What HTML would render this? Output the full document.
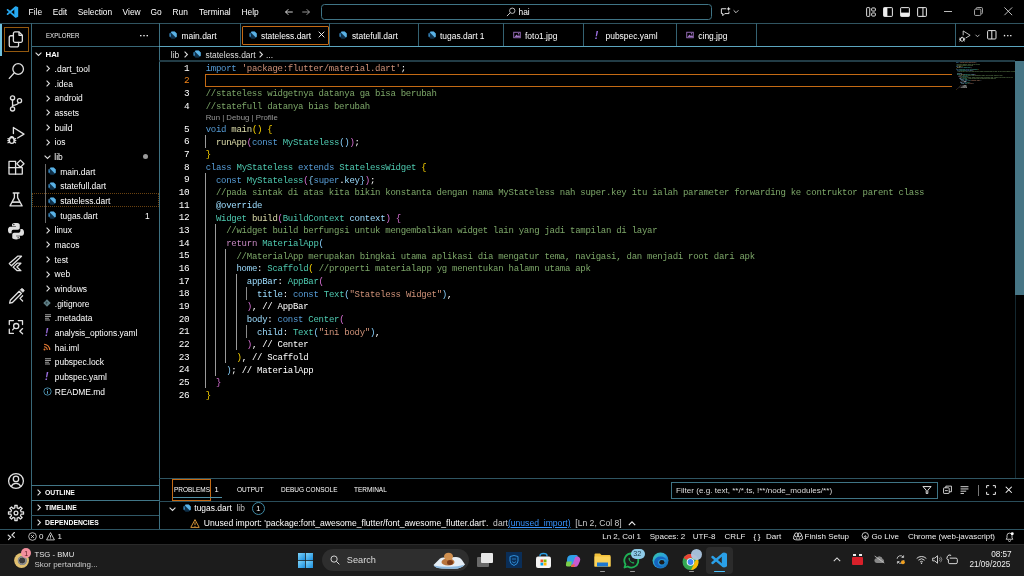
<!DOCTYPE html><html><head><meta charset="utf-8"><style>
*{margin:0;padding:0;box-sizing:border-box}
html,body{width:1024px;height:576px;overflow:hidden;background:#000}
body{position:relative;font-family:"Liberation Sans",sans-serif;color:#fff}
.a{position:absolute}
.t{position:absolute;white-space:pre;line-height:1}
.ui{font-size:8.4px}
.hl{position:absolute;height:1px;background:#3f7485}
.vl{position:absolute;width:1px;background:#3f7485}
.code{position:absolute;left:205.7px;font-family:"Liberation Mono",monospace;font-size:9px;letter-spacing:-0.269px;padding-top:1.7px;white-space:pre;height:12.667px;line-height:12.667px;color:#fff}
.ln{position:absolute;left:160px;width:29.2px;text-align:right;font-family:"Liberation Mono",monospace;font-size:9.4px;letter-spacing:-0.45px;padding-top:1.3px;height:12.667px;line-height:12.667px;color:#fff}
.k{color:#569cd6} .s{color:#ce9178} .c{color:#7ca668} .f{color:#dcdcaa} .ty{color:#4ec9b0} .v{color:#9cdcfe} .r{color:#c586c0}
.b1{color:#ffd700} .b2{color:#da70d6} .b3{color:#87cefa} .p{color:#fff}
.g{position:absolute;width:1px;background:#959595}
svg{position:absolute;overflow:visible}
</style></head><body><div id="root" style="position:absolute;left:0;top:0;width:1024px;height:576px;will-change:transform">
<svg class="a" style="left:0.6px;top:0.7px" width="20" height="20" viewBox="0 0 20 20"><path d="M13.3 6.3L15.6 5.4L17.2 6.2V15.8L15.6 16.6L13.3 15.7Z" fill="#26a8f0"/><path d="M14.6 6.2L6.6 13.1M6.6 8.9L14.6 15.8" stroke="#26a8f0" stroke-width="1.8" stroke-linecap="round"/></svg>
<div class="t ui" style="left:28.6px;top:7.5px;color:#fff">File</div>
<div class="t ui" style="left:52.7px;top:7.5px;color:#fff">Edit</div>
<div class="t ui" style="left:77.7px;top:7.5px;color:#fff">Selection</div>
<div class="t ui" style="left:122.6px;top:7.5px;color:#fff">View</div>
<div class="t ui" style="left:150.5px;top:7.5px;color:#fff">Go</div>
<div class="t ui" style="left:172.5px;top:7.5px;color:#fff">Run</div>
<div class="t ui" style="left:199px;top:7.5px;color:#fff">Terminal</div>
<div class="t ui" style="left:241.5px;top:7.5px;color:#fff">Help</div>
<svg style="left:284px;top:7px" width="10" height="10" viewBox="0 0 16 16"><path d="M14 8H2.5M7 3.5L2.5 8 7 12.5" stroke="#f0f0f0" stroke-width="1.4" fill="none"/></svg>
<svg style="left:301px;top:7px" width="10" height="10" viewBox="0 0 16 16"><path d="M2 8h11.5M9 3.5L13.5 8 9 12.5" stroke="#a8a8a8" stroke-width="1.4" fill="none"/></svg>
<div class="a" style="left:321px;top:4px;width:390.5px;height:15.5px;border:1px solid #3f7485;border-radius:3.5px"></div>
<svg style="left:506px;top:6.5px" width="10" height="10" viewBox="0 0 16 16"><circle cx="10" cy="6" r="4.3" stroke="#d0d0d0" stroke-width="1.4" fill="none"/><path d="M7 9L1.5 14.5" stroke="#d0d0d0" stroke-width="1.5"/></svg>
<div class="t ui" style="left:518.5px;top:7.5px">hai</div>
<svg style="left:720px;top:6px" width="11" height="11" viewBox="0 0 16 16"><path d="M2 4h7M2 4v7h2v3l3-3h6V8" stroke="#e8e8e8" stroke-width="1.4" fill="none"/><path d="M12.5 1l1 2.2 2.2 1-2.2 1-1 2.2-1-2.2-2.2-1 2.2-1z" fill="#e8e8e8"/></svg>
<svg style="left:732.5px;top:9px" width="6" height="5" viewBox="0 0 10 8"><path d="M1 2l4 4 4-4" stroke="#ddd" stroke-width="1.5" fill="none"/></svg>
<svg style="left:866px;top:7px" width="10" height="10" viewBox="0 0 16 16"><rect x="1" y="1" width="5" height="14" rx="1" stroke="#eee" stroke-width="1.5" fill="none"/><rect x="9" y="1.5" width="6" height="5" rx="1.5" stroke="#eee" stroke-width="1.5" fill="none"/><rect x="9" y="9.5" width="6" height="5" rx="1.5" stroke="#eee" stroke-width="1.5" fill="none"/></svg>
<svg style="left:882.5px;top:7px" width="10" height="10" viewBox="0 0 16 16"><rect x="1" y="1" width="14" height="14" rx="1" stroke="#eee" stroke-width="1.6" fill="none"/><rect x="1" y="1" width="6" height="14" fill="#eee"/></svg>
<svg style="left:899.5px;top:7px" width="10" height="10" viewBox="0 0 16 16"><rect x="1" y="1" width="14" height="14" rx="1" stroke="#eee" stroke-width="1.6" fill="none"/><rect x="1" y="9" width="14" height="6" fill="#eee"/></svg>
<svg style="left:917px;top:7px" width="10" height="10" viewBox="0 0 16 16"><rect x="1" y="1" width="14" height="14" rx="1" stroke="#eee" stroke-width="1.6" fill="none"/><path d="M9.5 1v14" stroke="#eee" stroke-width="1.6"/></svg>
<div class="a" style="left:944px;top:11px;width:8px;height:1px;background:#bbb"></div>
<svg style="left:974px;top:7px" width="9" height="9" viewBox="0 0 10 10"><rect x="0.6" y="2.4" width="7" height="7" rx="1.2" stroke="#ccc" stroke-width="0.9" fill="none"/><path d="M2.4 2.2V1.8A1.2 1.2 0 0 1 3.6 0.6H8.2A1.2 1.2 0 0 1 9.4 1.8V6.4A1.2 1.2 0 0 1 8.2 7.6" stroke="#ccc" stroke-width="0.9" fill="none"/></svg>
<svg style="left:1004.2px;top:7.2px" width="8.6" height="8.6" viewBox="0 0 10 10"><path d="M0.5 0.5L9.5 9.5M9.5 0.5L0.5 9.5" stroke="#e8e8e8" stroke-width="0.95"/></svg>
<div class="hl" style="left:0;top:23px;width:1024px;background:rgb(48,84,97)"></div>
<div class="a" style="left:0;top:23.5px;width:1.5px;height:32px;background:#6fc3df"></div>
<div class="a" style="left:3.5px;top:26.5px;width:25.5px;height:25px;border:1px solid #94590f"></div>
<svg style="left:4px;top:28px" width="24" height="24" viewBox="0 0 24 24"><path d="M9.4 7.75H6.75A1.5 1.5 0 0 0 5.25 9.25V17.45A1.5 1.5 0 0 0 6.75 18.95H13.05A1.5 1.5 0 0 0 14.55 17.45V14.35" stroke="#e0e0e0" stroke-width="1.3" fill="none" stroke-linejoin="round" stroke-linecap="round"/><path d="M10.9 3.95H15L18.35 7.3V12.85A1.5 1.5 0 0 1 16.85 14.35H10.9A1.5 1.5 0 0 1 9.4 12.85V5.45A1.5 1.5 0 0 1 10.9 3.95Z" stroke="#e0e0e0" stroke-width="1.3" fill="none" stroke-linejoin="round" stroke-linecap="round"/><path d="M15 4.2V7.3H18.1" stroke="#e0e0e0" stroke-width="1.3" fill="none" stroke-linejoin="round" stroke-linecap="round"/></svg>
<svg style="left:4px;top:59px" width="24" height="24" viewBox="0 0 24 24"><circle cx="14.15" cy="10" r="5.3" stroke="#e0e0e0" stroke-width="1.3" fill="none" stroke-linejoin="round" stroke-linecap="round"/><path d="M5.3 19.4L9.9 14.3" stroke="#e0e0e0" stroke-width="1.3" fill="none" stroke-linejoin="round" stroke-linecap="round"/></svg>
<svg style="left:4px;top:91px" width="24" height="24" viewBox="0 0 24 24"><circle cx="8.54" cy="6.9" r="2.1" stroke="#e0e0e0" stroke-width="1.3" fill="none" stroke-linejoin="round" stroke-linecap="round"/><circle cx="15.5" cy="9.8" r="2.1" stroke="#e0e0e0" stroke-width="1.3" fill="none" stroke-linejoin="round" stroke-linecap="round"/><circle cx="8.54" cy="17.9" r="2.1" stroke="#e0e0e0" stroke-width="1.3" fill="none" stroke-linejoin="round" stroke-linecap="round"/><path d="M8.54 9V15.8M14.5 11.7Q13.3 14 8.7 14.4" stroke="#e0e0e0" stroke-width="1.3" fill="none" stroke-linejoin="round" stroke-linecap="round"/></svg>
<svg style="left:4px;top:123.33000000000001px" width="24" height="24" viewBox="0 0 24 24"><path d="M9.4 10.5V4.5L20 11.1L13.6 15" stroke="#e0e0e0" stroke-width="1.3" fill="none" stroke-linejoin="round" stroke-linecap="round"/><ellipse cx="7.8" cy="17.4" rx="2.4" ry="2.9" stroke="#e0e0e0" stroke-width="1.3" fill="none" stroke-linejoin="round" stroke-linecap="round"/><path d="M6 14.6Q7.8 12.6 9.6 14.6M4 15.6L5.5 16.3M11.6 15.6L10.1 16.3M3.8 17.6H5.4M11.8 17.6H10.2M4 19.8L5.5 19M11.6 19.8L10.1 19" stroke="#e0e0e0" stroke-width="1.3" fill="none" stroke-linejoin="round" stroke-linecap="round"/></svg>
<svg style="left:4px;top:155.33px" width="24" height="24" viewBox="0 0 24 24"><path d="M5 6.4H11.6V12.7H18.3V19.1H5Z" stroke="#e0e0e0" stroke-width="1.3" fill="none" stroke-linejoin="round" stroke-linecap="round"/><path d="M5 12.7H11.6V19.1" stroke="#e0e0e0" stroke-width="1.3" fill="none" stroke-linejoin="round" stroke-linecap="round"/><path d="M16.4 5.1L20 8.7L16.4 12.3L12.8 8.7Z" stroke="#e0e0e0" stroke-width="1.3" fill="none" stroke-linejoin="round" stroke-linecap="round"/></svg>
<svg style="left:4px;top:187.33px" width="24" height="24" viewBox="0 0 24 24"><path d="M9.2 6H15M10.4 6V10.6L6 18.9H18.1L13.6 10.6V6" stroke="#e0e0e0" stroke-width="1.3" fill="none" stroke-linejoin="round" stroke-linecap="round"/><path d="M8 15.1H16" stroke="#e0e0e0" stroke-width="1.6"/></svg>
<svg style="left:4px;top:219.33px" width="24" height="24" viewBox="0 0 24 24"><g transform="translate(2.4 3.8) scale(0.8 0.7)"><path d="M11.8 0.3c-5 0-4.7 2.2-4.7 2.2v2.3h4.8v.7H5.2S2 5.1 2 10.2s2.8 4.9 2.8 4.9h1.7v-2.4s-.1-2.8 2.8-2.8h4.7s2.7 0 2.7-2.6V3s.4-2.7-4.9-2.7z" fill="#e0e0e0"/><path d="M12.2 23.7c5 0 4.7-2.2 4.7-2.2v-2.3h-4.8v-.7h6.7s3.2.4 3.2-4.7-2.8-4.9-2.8-4.9h-1.7v2.4s.1 2.8-2.8 2.8h-4.7s-2.7 0-2.7 2.6V21s-.4 2.7 4.9 2.7z" fill="#e0e0e0"/><circle cx="9.3" cy="2.6" r=".9" fill="#000"/><circle cx="14.7" cy="21.4" r=".9" fill="#000"/></g></svg>
<svg style="left:4px;top:251.32999999999998px" width="24" height="24" viewBox="0 0 24 24"><path d="M17.5 5.2H13.7L5.3 12.6L7.4 14.7Z" stroke="#e0e0e0" stroke-width="1.3" fill="none" stroke-linejoin="round" stroke-linecap="round"/><path d="M16.9 12.2H13.2L9.1 16.1L13.2 19.7H16.9L12.9 16Z" stroke="#e0e0e0" stroke-width="1.3" fill="none" stroke-linejoin="round" stroke-linecap="round"/></svg>
<svg style="left:4px;top:283.33px" width="24" height="24" viewBox="0 0 24 24"><path d="M15.2 8.3L17.4 10.5L8.4 19.5L5.6 20.2L6.3 17.3Z" stroke="#e0e0e0" stroke-width="1.3" fill="none" stroke-linejoin="round" stroke-linecap="round"/><path d="M16.3 6.8L17.4 5.7Q18 5.1 18.6 5.7L19.9 7Q20.5 7.6 19.9 8.2L18.8 9.3Z" fill="#e0e0e0" stroke="#e0e0e0" stroke-width="0.8"/><path d="M18.6 12.8L16 15.4L18.6 18" stroke="#e0e0e0" stroke-width="1.3" fill="none" stroke-linejoin="round" stroke-linecap="round"/></svg>
<svg style="left:4px;top:315.33px" width="24" height="24" viewBox="0 0 24 24"><path d="M5.3 9.6V5.6H9.4M14.3 5.6H18.5V9.6M5.3 14.2V18.4H9.4" stroke="#e0e0e0" stroke-width="1.3" fill="none" stroke-linejoin="round" stroke-linecap="round"/><circle cx="12.2" cy="11.1" r="2.6" stroke="#e0e0e0" stroke-width="1.3" fill="none" stroke-linejoin="round" stroke-linecap="round"/><path d="M10.3 13.1L8.6 14.9" stroke="#e0e0e0" stroke-width="1.3" fill="none" stroke-linejoin="round" stroke-linecap="round"/><path d="M18.6 13.6L15.8 16.2L18.6 18.8" stroke="#e0e0e0" stroke-width="1.3" fill="none" stroke-linejoin="round" stroke-linecap="round"/></svg>
<svg style="left:4px;top:469.33px" width="24" height="24" viewBox="0 0 24 24"><circle cx="12" cy="12" r="7.4" stroke="#e0e0e0" stroke-width="1.3" fill="none" stroke-linejoin="round" stroke-linecap="round"/><circle cx="12" cy="9.9" r="2.7" stroke="#e0e0e0" stroke-width="1.3" fill="none" stroke-linejoin="round" stroke-linecap="round"/><path d="M7.3 17.4Q8.6 14.4 12 14.4Q15.4 14.4 16.7 17.4" stroke="#e0e0e0" stroke-width="1.3" fill="none" stroke-linejoin="round" stroke-linecap="round"/></svg>
<svg style="left:4px;top:501.33000000000004px" width="24" height="24" viewBox="0 0 24 24"><path d="M17.18 10.90 L19.51 10.81 L19.51 13.19 L17.18 13.10 L16.44 14.89 L18.15 16.47 L16.47 18.15 L14.89 16.44 L13.10 17.18 L13.19 19.51 L10.81 19.51 L10.90 17.18 L9.11 16.44 L7.53 18.15 L5.85 16.47 L7.56 14.89 L6.82 13.10 L4.49 13.19 L4.49 10.81 L6.82 10.90 L7.56 9.11 L5.85 7.53 L7.53 5.85 L9.11 7.56 L10.90 6.82 L10.81 4.49 L13.19 4.49 L13.10 6.82 L14.89 7.56 L16.47 5.85 L18.15 7.53 L16.44 9.11Z" stroke="#e0e0e0" stroke-width="1.3" fill="none" stroke-linejoin="round" stroke-linecap="round"/><circle cx="12" cy="12" r="1.9" stroke="#e0e0e0" stroke-width="1.3" fill="none" stroke-linejoin="round" stroke-linecap="round"/></svg>
<div class="vl" style="left:31px;top:23px;height:506px;background:rgb(57,104,120)"></div>
<div class="vl" style="left:159px;top:23px;height:506px;background:rgb(61,112,129)"></div>
<div class="t" style="left:45.6px;top:31.6px;font-size:7.5px;color:#eee;transform:scaleX(0.815);transform-origin:0 0">EXPLORER</div>
<div class="t" style="left:139.5px;top:31.5px;font-size:9px;letter-spacing:0.3px;color:#fff;font-weight:bold">···</div>
<div class="hl" style="left:31px;top:46px;width:128px;background:rgb(57,104,120)"></div>
<svg style="left:35px;top:52.0035px" width="7" height="4" viewBox="0 0 7 4"><path d="M0.6 0.6L3.5 3.4 6.4 0.6" stroke="#ddd" stroke-width="1.1" fill="none"/></svg>
<div class="t" style="left:45.5px;top:51.3035px;font-size:7.8px;font-weight:bold;color:#fff">HAI</div>
<svg style="left:46px;top:65.1705px" width="4" height="7" viewBox="0 0 4 7"><path d="M0.6 0.6L3.4 3.5 0.6 6.4" stroke="#ddd" stroke-width="1.1" fill="none"/></svg>
<div class="t" style="left:54.6px;top:64.9705px;font-size:8.45px;color:#fff">.dart_tool</div>
<svg style="left:46px;top:79.8375px" width="4" height="7" viewBox="0 0 4 7"><path d="M0.6 0.6L3.4 3.5 0.6 6.4" stroke="#ddd" stroke-width="1.1" fill="none"/></svg>
<div class="t" style="left:54.6px;top:79.6375px;font-size:8.45px;color:#fff">.idea</div>
<svg style="left:46px;top:94.5045px" width="4" height="7" viewBox="0 0 4 7"><path d="M0.6 0.6L3.4 3.5 0.6 6.4" stroke="#ddd" stroke-width="1.1" fill="none"/></svg>
<div class="t" style="left:54.6px;top:94.30449999999999px;font-size:8.45px;color:#fff">android</div>
<svg style="left:46px;top:109.1715px" width="4" height="7" viewBox="0 0 4 7"><path d="M0.6 0.6L3.4 3.5 0.6 6.4" stroke="#ddd" stroke-width="1.1" fill="none"/></svg>
<div class="t" style="left:54.6px;top:108.97149999999999px;font-size:8.45px;color:#fff">assets</div>
<svg style="left:46px;top:123.8385px" width="4" height="7" viewBox="0 0 4 7"><path d="M0.6 0.6L3.4 3.5 0.6 6.4" stroke="#ddd" stroke-width="1.1" fill="none"/></svg>
<div class="t" style="left:54.6px;top:123.6385px;font-size:8.45px;color:#fff">build</div>
<svg style="left:46px;top:138.50549999999998px" width="4" height="7" viewBox="0 0 4 7"><path d="M0.6 0.6L3.4 3.5 0.6 6.4" stroke="#ddd" stroke-width="1.1" fill="none"/></svg>
<div class="t" style="left:54.6px;top:138.3055px;font-size:8.45px;color:#fff">ios</div>
<svg style="left:44px;top:154.67249999999999px" width="7" height="4" viewBox="0 0 7 4"><path d="M0.6 0.6L3.5 3.4 6.4 0.6" stroke="#ddd" stroke-width="1.1" fill="none"/></svg>
<div class="t" style="left:54.3px;top:152.9725px;font-size:8.45px;color:#fff">lib</div>
<div class="a" style="left:142.5px;top:154.17249999999999px;width:5px;height:5px;border-radius:50%;background:#9a9a9a"></div>
<div class="a" style="left:32px;top:192.83999999999997px;width:127px;height:14.667px;border:1px dotted #6a4210"></div>
<div class="a" style="left:45px;top:164.006px;width:1px;height:58.668px;background:#6a6a6a"></div>
<svg style="left:47.7px;top:167.18949999999998px" width="8.3" height="8.3" viewBox="0 0 16 16"><path d="M5 1H11L15 5V11L11 15H5L1 11V5Z" fill="#0e2f48"/><path d="M5 1H11L15 5V11L13.3 12.7L3.6 3Z" fill="#5ab2e6"/><path d="M1 5L2.6 3.4L4 10.5L1 11Z" fill="#3d8fc8"/></svg>
<div class="t" style="left:60.2px;top:167.6395px;font-size:8.45px;color:#fff">main.dart</div>
<svg style="left:47.7px;top:181.85649999999998px" width="8.3" height="8.3" viewBox="0 0 16 16"><path d="M5 1H11L15 5V11L11 15H5L1 11V5Z" fill="#0e2f48"/><path d="M5 1H11L15 5V11L13.3 12.7L3.6 3Z" fill="#5ab2e6"/><path d="M1 5L2.6 3.4L4 10.5L1 11Z" fill="#3d8fc8"/></svg>
<div class="t" style="left:60.2px;top:182.3065px;font-size:8.45px;color:#fff">statefull.dart</div>
<svg style="left:47.7px;top:196.52349999999996px" width="8.3" height="8.3" viewBox="0 0 16 16"><path d="M5 1H11L15 5V11L11 15H5L1 11V5Z" fill="#0e2f48"/><path d="M5 1H11L15 5V11L13.3 12.7L3.6 3Z" fill="#5ab2e6"/><path d="M1 5L2.6 3.4L4 10.5L1 11Z" fill="#3d8fc8"/></svg>
<div class="t" style="left:60.2px;top:196.97349999999997px;font-size:8.45px;color:#fff">stateless.dart</div>
<svg style="left:47.7px;top:211.1905px" width="8.3" height="8.3" viewBox="0 0 16 16"><path d="M5 1H11L15 5V11L11 15H5L1 11V5Z" fill="#0e2f48"/><path d="M5 1H11L15 5V11L13.3 12.7L3.6 3Z" fill="#5ab2e6"/><path d="M1 5L2.6 3.4L4 10.5L1 11Z" fill="#3d8fc8"/></svg>
<div class="t" style="left:60.2px;top:211.6405px;font-size:8.45px;color:#fff">tugas.dart</div>
<div class="t" style="left:145px;top:211.6405px;font-size:8.45px;color:#fff">1</div>
<svg style="left:46px;top:226.50749999999996px" width="4" height="7" viewBox="0 0 4 7"><path d="M0.6 0.6L3.4 3.5 0.6 6.4" stroke="#ddd" stroke-width="1.1" fill="none"/></svg>
<div class="t" style="left:54.6px;top:226.30749999999998px;font-size:8.45px;color:#fff">linux</div>
<svg style="left:46px;top:241.1745px" width="4" height="7" viewBox="0 0 4 7"><path d="M0.6 0.6L3.4 3.5 0.6 6.4" stroke="#ddd" stroke-width="1.1" fill="none"/></svg>
<div class="t" style="left:54.6px;top:240.9745px;font-size:8.45px;color:#fff">macos</div>
<svg style="left:46px;top:255.8415px" width="4" height="7" viewBox="0 0 4 7"><path d="M0.6 0.6L3.4 3.5 0.6 6.4" stroke="#ddd" stroke-width="1.1" fill="none"/></svg>
<div class="t" style="left:54.6px;top:255.6415px;font-size:8.45px;color:#fff">test</div>
<svg style="left:46px;top:270.5085px" width="4" height="7" viewBox="0 0 4 7"><path d="M0.6 0.6L3.4 3.5 0.6 6.4" stroke="#ddd" stroke-width="1.1" fill="none"/></svg>
<div class="t" style="left:54.6px;top:270.30850000000004px;font-size:8.45px;color:#fff">web</div>
<svg style="left:46px;top:285.1755px" width="4" height="7" viewBox="0 0 4 7"><path d="M0.6 0.6L3.4 3.5 0.6 6.4" stroke="#ddd" stroke-width="1.1" fill="none"/></svg>
<div class="t" style="left:54.6px;top:284.9755px;font-size:8.45px;color:#fff">windows</div>
<svg style="left:42.5px;top:298.84250000000003px" width="8" height="8" viewBox="0 0 16 16"><path d="M8 0.5L15.5 8 8 15.5 0.5 8z" fill="#5f7f86"/><path d="M6.5 5.5l3 3M6.5 5.5v5" stroke="#1a2a2e" stroke-width="1.3"/></svg>
<div class="t" style="left:54.8px;top:299.64250000000004px;font-size:8.45px;color:#fff">.gitignore</div>
<svg style="left:44.8px;top:314.4095px" width="6" height="7" viewBox="0 0 12 14"><path d="M0 1.5h12M0 5h12M0 8.5h8M0 12h10" stroke="#a8a8a8" stroke-width="1.9"/></svg>
<div class="t" style="left:54.8px;top:314.3095px;font-size:8.45px;color:#fff">.metadata</div>
<div class="t" style="left:45px;top:327.0765px;font-size:10.5px;font-style:italic;font-weight:bold;color:#9b6fe0">!</div>
<div class="t" style="left:54.8px;top:328.97650000000004px;font-size:8.45px;color:#fff">analysis_options.yaml</div>
<svg style="left:43px;top:343.3435px" width="8" height="8" viewBox="0 0 16 16"><circle cx="3" cy="13" r="2" fill="#e37933"/><path d="M2 7.5a6.5 6.5 0 0 1 6.5 6.5M2 2.5A11.5 11.5 0 0 1 13.5 14" stroke="#e37933" stroke-width="2.2" fill="none"/></svg>
<div class="t" style="left:54.8px;top:343.6435px;font-size:8.45px;color:#fff">hai.iml</div>
<svg style="left:44.8px;top:358.4105px" width="6" height="7" viewBox="0 0 12 14"><path d="M0 1.5h12M0 5h12M0 8.5h8M0 12h10" stroke="#a8a8a8" stroke-width="1.9"/></svg>
<div class="t" style="left:54.8px;top:358.31050000000005px;font-size:8.45px;color:#fff">pubspec.lock</div>
<div class="t" style="left:45px;top:371.0775px;font-size:10.5px;font-style:italic;font-weight:bold;color:#9b6fe0">!</div>
<div class="t" style="left:54.8px;top:372.9775px;font-size:8.45px;color:#fff">pubspec.yaml</div>
<svg style="left:42.5px;top:386.84450000000004px" width="9" height="9" viewBox="0 0 16 16"><circle cx="8" cy="8" r="6.5" stroke="#519aba" stroke-width="1.5" fill="none"/><path d="M8 7v5" stroke="#519aba" stroke-width="1.8"/><circle cx="8" cy="4.6" r="1" fill="#519aba"/></svg>
<div class="t" style="left:54.8px;top:387.64450000000005px;font-size:8.45px;color:#fff">README.md</div>
<div class="hl" style="left:31px;top:485px;width:128px;background:rgb(65,118,135)"></div>
<svg style="left:37px;top:489.2px" width="4" height="7" viewBox="0 0 4 7"><path d="M0.6 0.6L3.4 3.5 0.6 6.4" stroke="#ddd" stroke-width="1.1" fill="none"/></svg>
<div class="t" style="left:45.3px;top:490.2px;font-size:7.1px;font-weight:bold;color:#fff;transform:scaleX(0.96);transform-origin:0 0">OUTLINE</div>
<div class="hl" style="left:31px;top:500px;width:128px;background:rgb(65,118,135)"></div>
<svg style="left:37px;top:504.2px" width="4" height="7" viewBox="0 0 4 7"><path d="M0.6 0.6L3.4 3.5 0.6 6.4" stroke="#ddd" stroke-width="1.1" fill="none"/></svg>
<div class="t" style="left:45.3px;top:505.2px;font-size:7.1px;font-weight:bold;color:#fff;transform:scaleX(0.96);transform-origin:0 0">TIMELINE</div>
<div class="hl" style="left:31px;top:515px;width:128px;background:rgb(48,88,103)"></div>
<svg style="left:37px;top:519.2px" width="4" height="7" viewBox="0 0 4 7"><path d="M0.6 0.6L3.4 3.5 0.6 6.4" stroke="#ddd" stroke-width="1.1" fill="none"/></svg>
<div class="t" style="left:45.3px;top:520.2px;font-size:7.1px;font-weight:bold;color:#fff;transform:scaleX(0.96);transform-origin:0 0">DEPENDENCIES</div>
<div class="vl" style="left:239.5px;top:23px;height:23.5px;background:rgb(52,98,114)"></div>
<svg style="left:169.0px;top:30.85px" width="8.3" height="8.3" viewBox="0 0 16 16"><path d="M5 1H11L15 5V11L11 15H5L1 11V5Z" fill="#0e2f48"/><path d="M5 1H11L15 5V11L13.3 12.7L3.6 3Z" fill="#5ab2e6"/><path d="M1 5L2.6 3.4L4 10.5L1 11Z" fill="#3d8fc8"/></svg>
<div class="t" style="left:181.5px;top:32.1px;font-size:8.45px;color:#fff">main.dart</div>
<div class="vl" style="left:329.0px;top:23px;height:23.5px;background:rgb(52,98,114)"></div>
<svg style="left:248.5px;top:30.85px" width="8.3" height="8.3" viewBox="0 0 16 16"><path d="M5 1H11L15 5V11L11 15H5L1 11V5Z" fill="#0e2f48"/><path d="M5 1H11L15 5V11L13.3 12.7L3.6 3Z" fill="#5ab2e6"/><path d="M1 5L2.6 3.4L4 10.5L1 11Z" fill="#3d8fc8"/></svg>
<div class="t" style="left:261px;top:32.1px;font-size:8.45px;color:#fff">stateless.dart</div>
<div class="vl" style="left:417.8px;top:23px;height:23.5px;background:rgb(52,98,114)"></div>
<svg style="left:339.4px;top:30.85px" width="8.3" height="8.3" viewBox="0 0 16 16"><path d="M5 1H11L15 5V11L11 15H5L1 11V5Z" fill="#0e2f48"/><path d="M5 1H11L15 5V11L13.3 12.7L3.6 3Z" fill="#5ab2e6"/><path d="M1 5L2.6 3.4L4 10.5L1 11Z" fill="#3d8fc8"/></svg>
<div class="t" style="left:351.9px;top:32.1px;font-size:8.45px;color:#fff">statefull.dart</div>
<div class="vl" style="left:503.0px;top:23px;height:23.5px;background:rgb(52,98,114)"></div>
<svg style="left:427.5px;top:30.85px" width="8.3" height="8.3" viewBox="0 0 16 16"><path d="M5 1H11L15 5V11L11 15H5L1 11V5Z" fill="#0e2f48"/><path d="M5 1H11L15 5V11L13.3 12.7L3.6 3Z" fill="#5ab2e6"/><path d="M1 5L2.6 3.4L4 10.5L1 11Z" fill="#3d8fc8"/></svg>
<div class="t" style="left:440px;top:32.1px;font-size:8.45px;color:#fff">tugas.dart 1</div>
<div class="vl" style="left:583.3px;top:23px;height:23.5px;background:rgb(52,98,114)"></div>
<svg style="left:512.5px;top:31px" width="8" height="8" viewBox="0 0 16 16"><rect x="1.5" y="2.5" width="13" height="11" stroke="#a074c4" stroke-width="1.8" fill="none"/><path d="M3 12l4-5 3 3 2-2 2.5 4z" fill="#a074c4"/><circle cx="11" cy="5.5" r="1.3" fill="#a074c4"/></svg>
<div class="t" style="left:525px;top:32.1px;font-size:8.45px;color:#fff">foto1.jpg</div>
<div class="vl" style="left:676.1px;top:23px;height:23.5px;background:rgb(52,98,114)"></div>
<div class="t" style="left:594.7px;top:29.6px;font-size:10.5px;font-style:italic;font-weight:bold;color:#9b6fe0">!</div>
<div class="t" style="left:605.5px;top:32.1px;font-size:8.45px;color:#fff">pubspec.yaml</div>
<div class="vl" style="left:756.0px;top:23px;height:23.5px;background:rgb(52,98,114)"></div>
<svg style="left:685.8px;top:31px" width="8" height="8" viewBox="0 0 16 16"><rect x="1.5" y="2.5" width="13" height="11" stroke="#a074c4" stroke-width="1.8" fill="none"/><path d="M3 12l4-5 3 3 2-2 2.5 4z" fill="#a074c4"/><circle cx="11" cy="5.5" r="1.3" fill="#a074c4"/></svg>
<div class="t" style="left:698.3px;top:32.1px;font-size:8.45px;color:#fff">cing.jpg</div>
<div class="a" style="left:242px;top:26px;width:86.5px;height:18.5px;border:1px solid #c46a14;border-radius:1px"></div>
<svg style="left:317.5px;top:31px" width="7" height="7" viewBox="0 0 10 10"><path d="M1 1L9 9M9 1L1 9" stroke="#fff" stroke-width="1.3"/></svg>
<div class="vl" style="left:955px;top:23px;height:23.5px;background:rgb(52,98,114)"></div>
<svg style="left:956.7px;top:28px" width="15.8" height="15.8" viewBox="0 0 24 24"><path d="M9.4 10.5V4.5L20 11.1L13.6 15" stroke="#e0e0e0" stroke-width="1.3" fill="none" stroke-linejoin="round" stroke-linecap="round"/><ellipse cx="7.8" cy="17.4" rx="2.4" ry="2.9" stroke="#e0e0e0" stroke-width="1.3" fill="none" stroke-linejoin="round" stroke-linecap="round"/><path d="M6 14.6Q7.8 12.6 9.6 14.6M4 15.6L5.5 16.3M11.6 15.6L10.1 16.3M3.8 17.6H5.4M11.8 17.6H10.2M4 19.8L5.5 19M11.6 19.8L10.1 19" stroke="#e0e0e0" stroke-width="1.3" fill="none" stroke-linejoin="round" stroke-linecap="round"/></svg>
<svg style="left:974.5px;top:33.5px" width="5" height="4" viewBox="0 0 10 8"><path d="M1 1.5l4 4 4-4" stroke="#ddd" stroke-width="1.6" fill="none"/></svg>
<svg style="left:987px;top:29.8px" width="9.6" height="9.6" viewBox="0 0 16 16"><rect x="1" y="1" width="14" height="14" rx="1.5" stroke="#eee" stroke-width="1.6" fill="none"/><path d="M8 1v14" stroke="#eee" stroke-width="1.6"/></svg>
<div class="t" style="left:1003.2px;top:31.6px;font-size:9px;font-weight:bold;color:#eee;letter-spacing:0.2px">···</div>
<div class="hl" style="left:159px;top:46px;width:865px;background:rgb(92,165,190)"></div>
<div class="t" style="left:170.8px;top:50.8px;font-size:8.45px;color:#ddd">lib</div>
<svg style="left:184px;top:50.5px" width="4" height="7" viewBox="0 0 4 7"><path d="M0.6 0.6L3.4 3.5 0.6 6.4" stroke="#ddd" stroke-width="1.1" fill="none"/></svg>
<svg style="left:193px;top:49.85px" width="8.3" height="8.3" viewBox="0 0 16 16"><path d="M5 1H11L15 5V11L11 15H5L1 11V5Z" fill="#0e2f48"/><path d="M5 1H11L15 5V11L13.3 12.7L3.6 3Z" fill="#5ab2e6"/><path d="M1 5L2.6 3.4L4 10.5L1 11Z" fill="#3d8fc8"/></svg>
<div class="t" style="left:205.5px;top:50.8px;font-size:8.45px;color:#ddd">stateless.dart</div>
<svg style="left:259px;top:50.5px" width="4" height="7" viewBox="0 0 4 7"><path d="M0.6 0.6L3.4 3.5 0.6 6.4" stroke="#ddd" stroke-width="1.1" fill="none"/></svg>
<div class="t" style="left:266px;top:50.8px;font-size:8.45px;color:#ddd">...</div>
<div class="hl" style="left:159px;top:60px;width:856px;height:2px;background:rgb(34,60,70)"></div>
<div class="a" style="left:205px;top:73.997px;width:747px;height:12.667px;border:1px solid #c46a14;border-right:none"></div>
<div class="ln" style="top:61.33px;color:#fff">1</div>
<div class="code" style="top:61.33px"><span class="k">import</span> <span class="s">&#x27;package:flutter/material.dart&#x27;</span>;</div>
<div class="ln" style="top:73.997px;color:#f38518">2</div>
<div class="code" style="top:73.997px"></div>
<div class="ln" style="top:86.664px;color:#fff">3</div>
<div class="code" style="top:86.664px"><span class="c">//stateless widgetnya datanya ga bisa berubah</span></div>
<div class="ln" style="top:99.33099999999999px;color:#fff">4</div>
<div class="code" style="top:99.33099999999999px"><span class="c">//statefull datanya bias berubah</span></div>
<div class="ln" style="top:122.4px;color:#fff">5</div>
<div class="code" style="top:122.4px"><span class="k">void</span> <span class="f">main</span><span class="b1">()</span> <span class="b1">{</span></div>
<div class="ln" style="top:135.067px;color:#fff">6</div>
<div class="code" style="top:135.067px">  <span class="f">runApp</span><span class="b2">(</span><span class="k">const</span> <span class="ty">MyStateless</span><span class="b3">()</span><span class="b2">)</span>;</div>
<div class="ln" style="top:147.734px;color:#fff">7</div>
<div class="code" style="top:147.734px"><span class="b1">}</span></div>
<div class="ln" style="top:160.401px;color:#fff">8</div>
<div class="code" style="top:160.401px"><span class="k">class</span> <span class="ty">MyStateless</span> <span class="k">extends</span> <span class="ty">StatelessWidget</span> <span class="b1">{</span></div>
<div class="ln" style="top:173.068px;color:#fff">9</div>
<div class="code" style="top:173.068px">  <span class="k">const</span> <span class="ty">MyStateless</span><span class="b2">(</span><span class="b3">{</span><span class="k">super</span>.<span class="v">key</span><span class="b3">}</span><span class="b2">)</span>;</div>
<div class="ln" style="top:185.735px;color:#fff">10</div>
<div class="code" style="top:185.735px">  <span class="c">//pada sintak di atas kita bikin konstanta dengan nama MyStateless nah super.key itu ialah parameter forwarding ke contruktor parent class</span></div>
<div class="ln" style="top:198.402px;color:#fff">11</div>
<div class="code" style="top:198.402px">  <span class="v">@override</span></div>
<div class="ln" style="top:211.06900000000002px;color:#fff">12</div>
<div class="code" style="top:211.06900000000002px">  <span class="ty">Widget</span> <span class="f">build</span><span class="b2">(</span><span class="ty">BuildContext</span> <span class="v">context</span><span class="b2">)</span> <span class="b2">{</span></div>
<div class="ln" style="top:223.736px;color:#fff">13</div>
<div class="code" style="top:223.736px">    <span class="c">//widget build berfungsi untuk mengembalikan widget lain yang jadi tampilan di layar</span></div>
<div class="ln" style="top:236.40300000000002px;color:#fff">14</div>
<div class="code" style="top:236.40300000000002px">    <span class="r">return</span> <span class="ty">MaterialApp</span><span class="b3">(</span></div>
<div class="ln" style="top:249.07px;color:#fff">15</div>
<div class="code" style="top:249.07px">      <span class="c">//MaterialApp merupakan bingkai utama aplikasi dia mengatur tema, navigasi, dan menjadi root dari apk</span></div>
<div class="ln" style="top:261.73699999999997px;color:#fff">16</div>
<div class="code" style="top:261.73699999999997px">      <span class="v">home</span>: <span class="ty">Scaffold</span><span class="b1">(</span> <span class="c">//properti materialapp yg menentukan halamn utama apk</span></div>
<div class="ln" style="top:274.404px;color:#fff">17</div>
<div class="code" style="top:274.404px">        <span class="v">appBar</span>: <span class="ty">AppBar</span><span class="b2">(</span></div>
<div class="ln" style="top:287.071px;color:#fff">18</div>
<div class="code" style="top:287.071px">          <span class="v">title</span>: <span class="k">const</span> <span class="ty">Text</span><span class="b3">(</span><span class="s">&quot;Stateless Widget&quot;</span><span class="b3">)</span>,</div>
<div class="ln" style="top:299.738px;color:#fff">19</div>
<div class="code" style="top:299.738px">        <span class="b2">)</span>, <span class="p">// AppBar</span></div>
<div class="ln" style="top:312.405px;color:#fff">20</div>
<div class="code" style="top:312.405px">        <span class="v">body</span>: <span class="k">const</span> <span class="ty">Center</span><span class="b2">(</span></div>
<div class="ln" style="top:325.072px;color:#fff">21</div>
<div class="code" style="top:325.072px">          <span class="v">child</span>: <span class="ty">Text</span><span class="b3">(</span><span class="s">&quot;ini body&quot;</span><span class="b3">)</span>,</div>
<div class="ln" style="top:337.73900000000003px;color:#fff">22</div>
<div class="code" style="top:337.73900000000003px">        <span class="b2">)</span>, <span class="p">// Center</span></div>
<div class="ln" style="top:350.406px;color:#fff">23</div>
<div class="code" style="top:350.406px">      <span class="b1">)</span>, <span class="p">// Scaffold</span></div>
<div class="ln" style="top:363.073px;color:#fff">24</div>
<div class="code" style="top:363.073px">    <span class="b3">)</span>; <span class="p">// MaterialApp</span></div>
<div class="ln" style="top:375.74px;color:#fff">25</div>
<div class="code" style="top:375.74px">  <span class="b2">}</span></div>
<div class="ln" style="top:388.40700000000004px;color:#fff">26</div>
<div class="code" style="top:388.40700000000004px"><span class="b1">}</span></div>
<div class="t" style="left:205.7px;top:114.2px;font-size:7.8px;color:#999">Run | Debug | Profile</div>
<div class="g" style="left:205px;top:135.07px;height:12.67px;background:#9a9a9a"></div>
<div class="g" style="left:205px;top:173.07px;height:215.34px;background:#9a9a9a"></div>
<div class="g" style="left:215px;top:223.74px;height:152.00px;background:#9a9a9a"></div>
<div class="g" style="left:225px;top:249.07px;height:114.00px;background:#9a9a9a"></div>
<div class="g" style="left:236px;top:274.40px;height:76.00px;background:#9a9a9a"></div>
<div class="g" style="left:246px;top:287.07px;height:12.67px;background:#8a8a8a"></div>
<div class="g" style="left:246px;top:325.07px;height:12.67px;background:#8a8a8a"></div>
<div class="a" style="left:955.5px;top:61.5px;width:581px;height:340px;overflow:hidden;transform:scale(0.1033,0.086);transform-origin:0 0;font-family:'Liberation Mono',monospace;font-size:9px;letter-spacing:-0.269px;font-weight:bold;opacity:0.85"><div style="position:absolute;left:0;top:0.0px;height:12.667px;line-height:12.667px;white-space:pre"><span class="k">import</span> <span class="s">&#x27;package:flutter/material.dart&#x27;</span>;</div><div style="position:absolute;left:0;top:12.667px;height:12.667px;line-height:12.667px;white-space:pre"></div><div style="position:absolute;left:0;top:25.334px;height:12.667px;line-height:12.667px;white-space:pre"><span class="c">//stateless widgetnya datanya ga bisa berubah</span></div><div style="position:absolute;left:0;top:38.001px;height:12.667px;line-height:12.667px;white-space:pre"><span class="c">//statefull datanya bias berubah</span></div><div style="position:absolute;left:0;top:50.668px;height:12.667px;line-height:12.667px;white-space:pre"><span class="k">void</span> <span class="f">main</span><span class="b1">()</span> <span class="b1">{</span></div><div style="position:absolute;left:0;top:63.335px;height:12.667px;line-height:12.667px;white-space:pre">  <span class="f">runApp</span><span class="b2">(</span><span class="k">const</span> <span class="ty">MyStateless</span><span class="b3">()</span><span class="b2">)</span>;</div><div style="position:absolute;left:0;top:76.002px;height:12.667px;line-height:12.667px;white-space:pre"><span class="b1">}</span></div><div style="position:absolute;left:0;top:88.669px;height:12.667px;line-height:12.667px;white-space:pre"><span class="k">class</span> <span class="ty">MyStateless</span> <span class="k">extends</span> <span class="ty">StatelessWidget</span> <span class="b1">{</span></div><div style="position:absolute;left:0;top:101.336px;height:12.667px;line-height:12.667px;white-space:pre">  <span class="k">const</span> <span class="ty">MyStateless</span><span class="b2">(</span><span class="b3">{</span><span class="k">super</span>.<span class="v">key</span><span class="b3">}</span><span class="b2">)</span>;</div><div style="position:absolute;left:0;top:114.003px;height:12.667px;line-height:12.667px;white-space:pre">  <span class="c">//pada sintak di atas kita bikin konstanta dengan nama MyStateless nah super.key itu ialah parameter forwarding ke contruktor parent class</span></div><div style="position:absolute;left:0;top:126.67px;height:12.667px;line-height:12.667px;white-space:pre">  <span class="v">@override</span></div><div style="position:absolute;left:0;top:139.337px;height:12.667px;line-height:12.667px;white-space:pre">  <span class="ty">Widget</span> <span class="f">build</span><span class="b2">(</span><span class="ty">BuildContext</span> <span class="v">context</span><span class="b2">)</span> <span class="b2">{</span></div><div style="position:absolute;left:0;top:152.004px;height:12.667px;line-height:12.667px;white-space:pre">    <span class="c">//widget build berfungsi untuk mengembalikan widget lain yang jadi tampilan di layar</span></div><div style="position:absolute;left:0;top:164.671px;height:12.667px;line-height:12.667px;white-space:pre">    <span class="r">return</span> <span class="ty">MaterialApp</span><span class="b3">(</span></div><div style="position:absolute;left:0;top:177.338px;height:12.667px;line-height:12.667px;white-space:pre">      <span class="c">//MaterialApp merupakan bingkai utama aplikasi dia mengatur tema, navigasi, dan menjadi root dari apk</span></div><div style="position:absolute;left:0;top:190.005px;height:12.667px;line-height:12.667px;white-space:pre">      <span class="v">home</span>: <span class="ty">Scaffold</span><span class="b1">(</span> <span class="c">//properti materialapp yg menentukan halamn utama apk</span></div><div style="position:absolute;left:0;top:202.672px;height:12.667px;line-height:12.667px;white-space:pre">        <span class="v">appBar</span>: <span class="ty">AppBar</span><span class="b2">(</span></div><div style="position:absolute;left:0;top:215.339px;height:12.667px;line-height:12.667px;white-space:pre">          <span class="v">title</span>: <span class="k">const</span> <span class="ty">Text</span><span class="b3">(</span><span class="s">&quot;Stateless Widget&quot;</span><span class="b3">)</span>,</div><div style="position:absolute;left:0;top:228.006px;height:12.667px;line-height:12.667px;white-space:pre">        <span class="b2">)</span>, <span class="p">// AppBar</span></div><div style="position:absolute;left:0;top:240.673px;height:12.667px;line-height:12.667px;white-space:pre">        <span class="v">body</span>: <span class="k">const</span> <span class="ty">Center</span><span class="b2">(</span></div><div style="position:absolute;left:0;top:253.34px;height:12.667px;line-height:12.667px;white-space:pre">          <span class="v">child</span>: <span class="ty">Text</span><span class="b3">(</span><span class="s">&quot;ini body&quot;</span><span class="b3">)</span>,</div><div style="position:absolute;left:0;top:266.007px;height:12.667px;line-height:12.667px;white-space:pre">        <span class="b2">)</span>, <span class="p">// Center</span></div><div style="position:absolute;left:0;top:278.674px;height:12.667px;line-height:12.667px;white-space:pre">      <span class="b1">)</span>, <span class="p">// Scaffold</span></div><div style="position:absolute;left:0;top:291.341px;height:12.667px;line-height:12.667px;white-space:pre">    <span class="b3">)</span>; <span class="p">// MaterialApp</span></div><div style="position:absolute;left:0;top:304.008px;height:12.667px;line-height:12.667px;white-space:pre">  <span class="b2">}</span></div><div style="position:absolute;left:0;top:316.675px;height:12.667px;line-height:12.667px;white-space:pre"><span class="b1">}</span></div></div>
<div class="a" style="left:1015px;top:61px;width:9px;height:234px;background:#467585"></div>
<div class="a" style="left:1014.5px;top:295px;width:1px;height:183px;background:#142830"></div>
<div class="hl" style="left:159px;top:478px;width:865px;background:rgb(47,85,99)"></div>
<div class="a" style="left:171.5px;top:479px;width:39.5px;height:21.5px;border:1px solid #c46a14"></div>
<div class="t" style="left:174px;top:486.8px;font-size:6.9px;color:#fff;transform:scaleX(0.94);transform-origin:0 0">PROBLEMS</div>
<div class="t" style="left:237px;top:486.8px;font-size:6.9px;color:#fff;transform:scaleX(0.94);transform-origin:0 0">OUTPUT</div>
<div class="t" style="left:280.6px;top:486.8px;font-size:6.9px;color:#fff;transform:scaleX(0.94);transform-origin:0 0">DEBUG CONSOLE</div>
<div class="t" style="left:353.8px;top:486.8px;font-size:6.9px;color:#fff;transform:scaleX(0.94);transform-origin:0 0">TERMINAL</div>
<div class="t" style="left:214.5px;top:486px;font-size:7.5px;color:#fff">1</div>
<div class="a" style="left:173px;top:496.8px;width:49px;height:1px;background:#4f8fa5"></div>
<div class="hl" style="left:159px;top:501px;width:865px;background:rgb(42,77,90)"></div>
<div class="a" style="left:671px;top:482px;width:266.5px;height:17px;border:1px solid #3f7485"></div>
<div class="t" style="left:676px;top:486.6px;font-size:8.1px;color:#ddd">Filter (e.g. text, **/*.ts, !**/node_modules/**)</div>
<svg style="left:921.5px;top:484.8px" width="10" height="10" viewBox="0 0 16 16"><path d="M1.5 2.5H14.5L9.3 8.3V13.5H6.7V8.3Z" stroke="#eee" stroke-width="1.5" fill="none" stroke-linejoin="round"/></svg>
<svg style="left:943px;top:485.3px" width="9" height="9" viewBox="0 0 16 16"><rect x="1" y="5" width="10" height="10" rx="1" stroke="#eee" stroke-width="1.5" fill="none"/><path d="M5 5V2h10v10h-4M3.5 10h5" stroke="#eee" stroke-width="1.5" fill="none"/></svg>
<svg style="left:959.5px;top:485.3px" width="9" height="9" viewBox="0 0 16 16"><path d="M1 3h14M1 7h14M1 11h10M1 15h6" stroke="#eee" stroke-width="1.6"/></svg>
<div class="a" style="left:978px;top:484.5px;width:1px;height:11px;background:#777"></div>
<svg style="left:986.3px;top:484.8px" width="10" height="10" viewBox="0 0 16 16"><path d="M1 5V1h4M11 1h4v4M15 11v4h-4M5 15H1v-4" stroke="#eee" stroke-width="1.6" fill="none"/></svg>
<svg style="left:1004.8px;top:485.6px" width="7.5" height="7.5" viewBox="0 0 10 10"><path d="M1 1L9 9M9 1L1 9" stroke="#fff" stroke-width="1.4"/></svg>
<svg style="left:169px;top:506.5px" width="7" height="4" viewBox="0 0 7 4"><path d="M0.6 0.6L3.5 3.4 6.4 0.6" stroke="#ddd" stroke-width="1.1" fill="none"/></svg>
<svg style="left:183px;top:504.35px" width="8.3" height="8.3" viewBox="0 0 16 16"><path d="M5 1H11L15 5V11L11 15H5L1 11V5Z" fill="#0e2f48"/><path d="M5 1H11L15 5V11L13.3 12.7L3.6 3Z" fill="#5ab2e6"/><path d="M1 5L2.6 3.4L4 10.5L1 11Z" fill="#3d8fc8"/></svg>
<div class="t" style="left:194.3px;top:503.8px;font-size:8.45px;color:#fff">tugas.dart</div>
<div class="t" style="left:236.5px;top:504.2px;font-size:8.4px;color:#c0c0c0">lib</div>
<div class="a" style="left:252px;top:502px;width:13px;height:13px;border:1.2px solid #3f8aa5;border-radius:50%"></div>
<div class="t" style="left:256.3px;top:504.8px;font-size:7.5px;color:#fff">1</div>
<svg style="left:190px;top:519px" width="10" height="9" viewBox="0 0 16 15"><path d="M8 1L15 14H1z" stroke="#e8a33d" stroke-width="1.5" fill="none" stroke-linejoin="round"/><path d="M8 5.5v4.5" stroke="#e8a33d" stroke-width="1.6"/><circle cx="8" cy="12" r=".9" fill="#e8a33d"/></svg>
<div class="t" style="left:203.7px;top:519px;font-size:8.6px;color:#fff">Unused import: 'package:font_awesome_flutter/font_awesome_flutter.dart'.&nbsp; <span style="color:#ccc">dart</span><span style="color:#3794ff;text-decoration:underline">(unused_import)</span>&nbsp; <span style="color:#ccc">[Ln 2, Col 8]</span></div>
<svg style="left:627.5px;top:520.5px" width="8" height="5" viewBox="0 0 10 6"><path d="M1 5l4-4 4 4" stroke="#eee" stroke-width="1.4" fill="none"/></svg>
<div class="hl" style="left:0;top:529px;width:1024px;background:rgb(46,84,98)"></div>
<svg style="left:4px;top:530px" width="16" height="13" viewBox="0 0 16 13"><path d="M4.1 5L6.8 7.2 4.5 9.7M10.4 2.5L7.9 5 10.4 7.4" stroke="#ddd" stroke-width="1.1" fill="none" stroke-linecap="round"/></svg>
<svg style="left:28px;top:532px" width="9" height="9" viewBox="0 0 16 16"><circle cx="8" cy="8" r="6.8" stroke="#eee" stroke-width="1.3" fill="none"/><path d="M5.3 5.3l5.4 5.4M10.7 5.3l-5.4 5.4" stroke="#eee" stroke-width="1.3"/></svg>
<div class="t" style="left:39px;top:533.2px;font-size:8.0px;color:#eee">0</div>
<svg style="left:46.3px;top:532px" width="9" height="8.5" viewBox="0 0 16 15"><path d="M8 1L15 14H1z" stroke="#eee" stroke-width="1.4" fill="none" stroke-linejoin="round"/><path d="M8 5.5v4.5" stroke="#eee" stroke-width="1.5"/><circle cx="8" cy="12" r=".8" fill="#eee"/></svg>
<div class="t" style="left:57.5px;top:533.2px;font-size:8.0px;color:#eee">1</div>
<div class="t" style="left:602.2px;top:533.2px;font-size:8.0px;color:#eee">Ln 2, Col 1</div>
<div class="t" style="left:649.7px;top:533.2px;font-size:8.0px;color:#eee">Spaces: 2</div>
<div class="t" style="left:692.8px;top:533.2px;font-size:8.0px;color:#eee">UTF-8</div>
<div class="t" style="left:724.6px;top:533.2px;font-size:8.0px;color:#eee">CRLF</div>
<div class="t" style="left:766px;top:533.2px;font-size:8.0px;color:#eee">Dart</div>
<div class="t" style="left:804.6px;top:533.2px;font-size:8.0px;color:#eee">Finish Setup</div>
<div class="t" style="left:871.4px;top:533.2px;font-size:8.0px;color:#eee">Go Live</div>
<div class="t" style="left:907.9px;top:533.2px;font-size:8.0px;color:#eee">Chrome (web-javascript)</div>
<div class="t" style="left:753.5px;top:532.5px;font-size:8.0px;color:#fff;letter-spacing:1.5px">{}</div>
<svg style="left:792.5px;top:531.5px" width="10" height="9" viewBox="0 0 16 14"><path d="M3 5c-2 0-2 2-2 4v2c2 2 12 2 14 0V9c0-2 0-4-2-4" stroke="#eee" stroke-width="1.4" fill="none"/><ellipse cx="5.5" cy="4.5" rx="3" ry="3.2" stroke="#eee" stroke-width="1.4" fill="none"/><ellipse cx="10.5" cy="4.5" rx="3" ry="3.2" stroke="#eee" stroke-width="1.4" fill="none"/><path d="M6 9v2M10 9v2" stroke="#eee" stroke-width="1.3"/></svg>
<svg style="left:860.5px;top:531.5px" width="8.5" height="9.5" viewBox="0 0 16 18"><circle cx="8" cy="7" r="6" stroke="#eee" stroke-width="1.5" fill="none"/><path d="M8 7v10M5 10l3-3 3 3" stroke="#eee" stroke-width="1.4" fill="none"/></svg>
<svg style="left:1005px;top:531.5px" width="9" height="9.5" viewBox="0 0 16 17"><path d="M8 2a4.5 4.5 0 0 0-4.5 4.5v4L2 13h12l-1.5-2.5v-4A4.5 4.5 0 0 0 8 2zM6 15a2 2 0 0 0 4 0" stroke="#eee" stroke-width="1.4" fill="none"/><circle cx="13" cy="3" r="2.6" fill="#fff"/></svg>
<div class="a" style="left:0;top:544px;width:1024px;height:32px;background:#1c1c1c"></div>
<div class="a" style="left:0;top:544px;width:1024px;height:0.6px;background:#2a2a2a"></div>
<div class="a" style="left:13.5px;top:552.5px;width:15px;height:15px;border-radius:50%;background:radial-gradient(circle at 55% 50%,#3a3a3a 0 25%,#8a8a8a 28% 40%,#e0c070 44% 68%,#b09050 72%)"></div>
<div class="a" style="left:21px;top:548px;width:10px;height:10px;border-radius:50%;background:#f4909e"></div>
<div class="t" style="left:24.3px;top:549.8px;font-size:7px;color:#5a1a20">1</div>
<div class="t" style="left:34.5px;top:550.8px;font-size:7.7px;color:#e6e6e6">TSG - BMU</div>
<div class="t" style="left:34.5px;top:560.5px;font-size:8px;color:#ccc">Skor pertanding...</div>
<svg style="left:297.5px;top:553px" width="15" height="15" viewBox="0 0 16 16"><defs><linearGradient id="wg" x1="0" y1="0" x2="1" y2="1"><stop offset="0" stop-color="#7fd3f7"/><stop offset="1" stop-color="#1a8fe0"/></linearGradient></defs><rect x="0" y="0" width="7.6" height="7.6" fill="url(#wg)"/><rect x="8.4" y="0" width="7.6" height="7.6" fill="url(#wg)"/><rect x="0" y="8.4" width="7.6" height="7.6" fill="url(#wg)"/><rect x="8.4" y="8.4" width="7.6" height="7.6" fill="url(#wg)"/></svg>
<div class="a" style="left:321.7px;top:549px;width:147px;height:22px;border-radius:11px;background:#2e2e2e"></div>
<svg style="left:330px;top:555px" width="10" height="10" viewBox="0 0 16 16"><circle cx="6.5" cy="6.5" r="5" stroke="#ddd" stroke-width="1.5" fill="none"/><path d="M10.2 10.2L15 15" stroke="#ddd" stroke-width="1.6"/></svg>
<div class="t" style="left:346.8px;top:555.5px;font-size:9.2px;color:#ddd">Search</div>
<svg style="left:432px;top:551px" width="34" height="19" viewBox="0 0 34 19"><path d="M1.5 14L8 7.5Q10 6 13 6.5L24 6Q28 6 30 9L33 13.5Q30 17.5 22 17.8L10 17.5Q3 17 1.5 14Z" fill="#e6eef6"/><path d="M2 14.5Q10 16.5 22 15.5Q29 15 32.5 13.5Q30 17.5 22 17.8L10 17.5Q3 17 2 14.5Z" fill="#8ab8e0"/><ellipse cx="16" cy="11" rx="6.5" ry="3.6" fill="#b8743c"/><ellipse cx="16.5" cy="5.5" rx="4.5" ry="3.8" fill="#d09050"/><ellipse cx="18" cy="11.5" rx="3" ry="2.5" fill="#7a3a18"/></svg>
<div class="a" style="left:477px;top:557px;width:11.5px;height:10px;background:#6a6a6a;border-radius:1px"></div>
<div class="a" style="left:481px;top:552.5px;width:12px;height:10.5px;background:#e8e8e8;border-radius:1px"></div>
<div class="a" style="left:506px;top:552px;width:16px;height:16px;background:#0a2e58"></div>
<svg style="left:509px;top:554.5px" width="10" height="11" viewBox="0 0 10 11"><path d="M1 1.5Q5 -0.5 9 1.5V6Q9 9 5 10.5Q1 9 1 6Z" stroke="#2f8fd8" stroke-width="1" fill="none"/><path d="M3 4h4M3 6.5l2 1.5 2-1.5" stroke="#2f8fd8" stroke-width="0.8" fill="none"/></svg>
<svg style="left:535px;top:551.5px" width="17" height="17" viewBox="0 0 17 17"><path d="M5 4.5V3.5Q5 1.5 8.5 1.5Q12 1.5 12 3.5V4.5" stroke="#2aa0e8" stroke-width="1.3" fill="none"/><rect x="1" y="4.5" width="15" height="11.5" rx="2" fill="#f4f4f4"/><rect x="5.5" y="7.5" width="2.8" height="2.8" fill="#f25022"/><rect x="8.7" y="7.5" width="2.8" height="2.8" fill="#7fba00"/><rect x="5.5" y="10.7" width="2.8" height="2.8" fill="#00a4ef"/><rect x="8.7" y="10.7" width="2.8" height="2.8" fill="#ffb900"/></svg>
<svg style="left:564px;top:552.5px" width="18" height="15" viewBox="0 0 18 15"><path d="M3 7Q3 2 8 2H12Q14.5 2 13.5 4.5L10 13H6Q2 13 3 9Z" fill="#2f9fe8"/><path d="M2.5 8.5H8L6.5 13.5H3.5Q1.5 13.5 2 11Z" fill="#7ad04a"/><path d="M11 4.5Q12 3 14 3.5Q17 4.5 16 8L14.5 11.5Q13.5 14 10.5 14H7.5Z" fill="#c85ad0"/><path d="M7.5 11.5H11L10 14H7Z" fill="#f06040"/></svg>
<svg style="left:593.5px;top:553px" width="17" height="14" viewBox="0 0 17 14"><path d="M0.5 1.5Q0.5 0.5 1.5 0.5H6L7.5 2H15.5Q16.5 2 16.5 3V13Q16.5 13.5 16 13.5H1Q0.5 13.5 0.5 13Z" fill="#f3c13a"/><rect x="0.5" y="3.5" width="16" height="10" fill="#fbd35a"/><rect x="3" y="9.5" width="11" height="4" fill="#1e78d0"/></svg>
<div class="a" style="left:600px;top:571px;width:5px;height:1.3px;border-radius:1px;background:#9a9a9a"></div>
<svg style="left:623px;top:552px" width="17" height="17" viewBox="0 0 17 17"><path d="M8.5 1.5A7 7 0 1 1 4.8 14.5L1.5 15.5L2.5 12.3A7 7 0 0 1 8.5 1.5Z" stroke="#1fb155" stroke-width="1.8" fill="none" stroke-linejoin="round"/><path d="M6 5.5Q5.2 6 5.6 7.5Q6.8 10.5 9.8 11.5Q11 11.8 11.4 11L10.2 9.8L9.2 10.2Q7.5 9.5 6.8 7.8L7.2 6.8Z" fill="#1fb155"/></svg>
<div class="a" style="left:631px;top:548.5px;width:14px;height:10px;border-radius:5px;background:#8fcbe8"></div><div class="t" style="left:633.2px;top:549.6px;font-size:7.2px;color:#1c3a48">32</div>
<div class="a" style="left:629.5px;top:571px;width:5px;height:1.3px;border-radius:1px;background:#9a9a9a"></div>
<svg style="left:652px;top:552px" width="17" height="17" viewBox="0 0 17 17"><defs><linearGradient id="eg1" x1="0" y1="0" x2="1" y2="1"><stop offset="0" stop-color="#37c6a0"/><stop offset="0.5" stop-color="#2a9fe0"/><stop offset="1" stop-color="#0c5aa6"/></linearGradient></defs><circle cx="8.5" cy="8.5" r="8" fill="url(#eg1)"/><path d="M2 10Q3 4.5 8.5 4.5Q13.5 4.5 15 9Q14 7 10.5 7Q6 7 6 10.5Q6 14 11 14.5Q8 16.5 5 15Q2 13 2 10Z" fill="#1565c0"/><ellipse cx="9.8" cy="10.3" rx="2.6" ry="2.2" fill="#1c1c1c"/></svg>
<svg style="left:682px;top:553px" width="18" height="18" viewBox="0 0 18 18"><circle cx="8.5" cy="9" r="8" fill="#34a853"/><path d="M8.5 1A8 8 0 0 1 15.4 5H8.5A4 4 0 0 0 5 7L1.6 5A8 8 0 0 1 8.5 1Z" fill="#ea4335"/><path d="M15.4 5A8 8 0 0 1 9 17L12 11A4 4 0 0 0 12.5 9Z" fill="#fbbc05"/><circle cx="8.5" cy="9" r="3.8" fill="#fff"/><circle cx="8.5" cy="9" r="2.9" fill="#4285f4"/></svg>
<div class="a" style="left:691px;top:548.5px;width:11px;height:11px;border-radius:50%;background:#b0cbe6;opacity:.92"></div>
<div class="a" style="left:689px;top:571px;width:5px;height:1.3px;border-radius:1px;background:#9a9a9a"></div>
<div class="a" style="left:705.5px;top:546.5px;width:27.5px;height:27px;border-radius:4px;background:#2b2b2b"></div>
<svg style="left:709px;top:549.5px" width="20" height="20" viewBox="0 0 20 20"><path d="M12.8 3.8L15.8 2.6L18 3.7V16.3L15.8 17.4L12.8 16.2Z" fill="#2aa0e8"/><path d="M14.3 3.8L3.5 13M3.5 7L14.3 16.2" stroke="#2aa0e8" stroke-width="2.4" stroke-linecap="round"/></svg>
<div class="a" style="left:714px;top:570.5px;width:10.5px;height:1.6px;border-radius:1px;background:#4cc2ff"></div>
<svg style="left:832.5px;top:557px" width="8" height="5" viewBox="0 0 10 6"><path d="M1 5l4-4 4 4" stroke="#ddd" stroke-width="1.3" fill="none"/></svg>
<div class="a" style="left:852px;top:557px;width:11px;height:8px;background:#d8202a;border-radius:1px"></div><div class="a" style="left:853px;top:554px;width:3px;height:2px;background:#eee"></div><div class="a" style="left:859px;top:554px;width:3px;height:2px;background:#eee"></div>
<svg style="left:874px;top:555px" width="11" height="9" viewBox="0 0 16 12"><path d="M4 11a3.5 3.5 0 0 1 0-7 4.5 4.5 0 0 1 8.5 1.2A3 3 0 0 1 12.5 11z" fill="#888"/><path d="M1 1l14 10" stroke="#ccc" stroke-width="1.2"/></svg>
<svg style="left:895px;top:554px" width="11" height="11" viewBox="0 0 16 16"><path d="M3 7a5 5 0 0 1 9-2.5M13 9a5 5 0 0 1-9 2.5" stroke="#ccc" stroke-width="1.3" fill="none"/><path d="M12.5 2v3h-3M3.5 14v-3h3" stroke="#ccc" stroke-width="1.3" fill="none"/><circle cx="11.5" cy="12" r="2.8" fill="#f0a020"/></svg>
<svg style="left:916px;top:555px" width="11" height="9" viewBox="0 0 16 13"><path d="M1 5a10 10 0 0 1 14 0M3.5 7.5a6.5 6.5 0 0 1 9 0M6 10a3 3 0 0 1 4 0" stroke="#eee" stroke-width="1.3" fill="none"/><circle cx="8" cy="12" r="1" fill="#eee"/></svg>
<svg style="left:932px;top:555px" width="11" height="9" viewBox="0 0 16 13"><path d="M1 4.5h3L8 1v11L4 8.5H1z" stroke="#eee" stroke-width="1.2" fill="none"/><path d="M10.5 4a3.5 3.5 0 0 1 0 5M12.5 2.5a6 6 0 0 1 0 8" stroke="#aaa" stroke-width="1.1" fill="none"/></svg>
<svg style="left:947px;top:554px" width="11" height="11" viewBox="0 0 16 16"><path d="M4 6h9a2 2 0 0 1 2 2v4a2 2 0 0 1-2 2H4a2 2 0 0 1-2-2V8" stroke="#eee" stroke-width="1.3" fill="none"/><path d="M2 9a4 4 0 0 1 4-7" stroke="#eee" stroke-width="1.4" fill="none"/></svg>
<div class="t" style="left:991.2px;top:550.6px;font-size:8.2px;color:#eee">08:57</div>
<div class="t" style="left:969.4px;top:561.3px;font-size:8.2px;color:#eee">21/09/2025</div>
</div></body></html>
